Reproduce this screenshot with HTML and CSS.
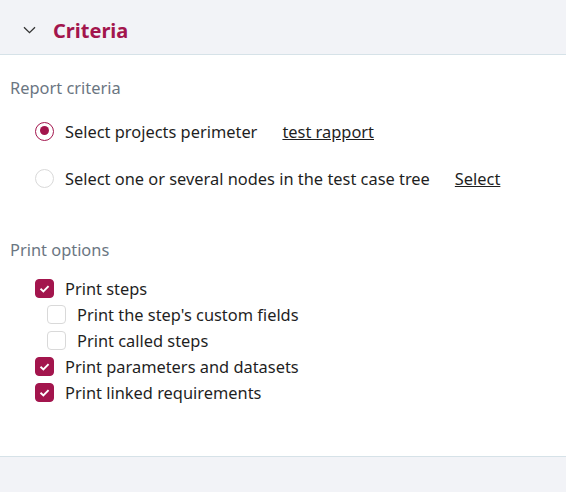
FILE: index.html
```html
<!DOCTYPE html>
<html>
<head>
<meta charset="utf-8">
<link rel="stylesheet" href="styles.css">
</head>
<body>
<div class="page">
  <div class="header">
    <svg class="chevron" width="13" height="8" viewBox="0 0 13 8"><path d="M1 1.2 L6.5 6.7 L12 1.2" fill="none" stroke="#333" stroke-width="1.3"/></svg>
    <span class="title">Criteria</span>
  </div>
  <div class="content">
    <div class="section-title">Report criteria</div>
    <div class="radios">
      <div class="radio-row">
        <span class="radio checked"></span>
        <span class="label">Select projects perimeter</span>
        <a class="link">test rapport</a>
      </div>
      <div class="radio-row">
        <span class="radio"></span>
        <span class="label">Select one or several nodes in the test case tree</span>
        <a class="link">Select</a>
      </div>
    </div>
    <div class="section-title print">Print options</div>
    <div class="checks">
      <div class="check-row"><span class="cb on"><svg viewBox="0 0 18 18"><path d="M4.8 9.3 L7.8 12.2 L13.3 6.4" fill="none" stroke="#fff" stroke-width="2"/></svg></span><span class="label">Print steps</span></div>
      <div class="check-row sub"><span class="cb"></span><span class="label">Print the step's custom fields</span></div>
      <div class="check-row sub"><span class="cb"></span><span class="label">Print called steps</span></div>
      <div class="check-row"><span class="cb on"><svg viewBox="0 0 18 18"><path d="M4.8 9.3 L7.8 12.2 L13.3 6.4" fill="none" stroke="#fff" stroke-width="2"/></svg></span><span class="label">Print parameters and datasets</span></div>
      <div class="check-row"><span class="cb on"><svg viewBox="0 0 18 18"><path d="M4.8 9.3 L7.8 12.2 L13.3 6.4" fill="none" stroke="#fff" stroke-width="2"/></svg></span><span class="label">Print linked requirements</span></div>
    </div>
  </div>
  <div class="footer"></div>
</div>
</body>
</html>
```
FILE: styles.css
```css
* { box-sizing: border-box; }
html, body { margin: 0; padding: 0; }
body { font-family: "Noto Sans", "Open Sans", sans-serif; color: #1f1f1f; background: #fff; width: 566px; height: 492px; overflow: hidden; }
.page { display: flex; flex-direction: column; height: 492px; }
.header { height: 55px; background: #f2f3f7; border-bottom: 1px solid #d6e2e8; display: flex; align-items: center; padding-left: 23px; padding-top: 6px; }
.chevron { margin-right: 17px; }
.title { color: #a3154d; font-weight: 700; font-size: 20px; }
.content { flex: 1; padding-left: 10px; }
.section-title { color: #6b7682; font-size: 16.4px; margin-top: 22px; height: 22px; line-height: 22px; }
.section-title.print { margin-top: 50px; }
.radios { padding-left: 25px; margin-top: 21px; display: flex; flex-direction: column; gap: 25px; }
.radio-row { display: flex; align-items: center; height: 22px; font-size: 16.4px; }
.radio { width: 19px; height: 19px; border-radius: 50%; border: 1px solid #d9d9d9; margin-right: 11px; background: #fff; position: relative; }
.radio.checked { border: 1.5px solid #a3154d; }
.radio.checked::after { content: ""; position: absolute; left: 3.5px; top: 3.5px; width: 9px; height: 9px; border-radius: 50%; background: #a3154d; }
.link { text-decoration: underline; color: #1f1f1f; margin-left: 25px; }
.checks { padding-left: 25px; margin-top: 16px; display: flex; flex-direction: column; gap: 4px; }
.check-row { display: flex; align-items: center; height: 22px; font-size: 16.4px; }
.check-row.sub { padding-left: 12px; }
.cb { width: 19px; height: 19px; border-radius: 4px; border: 1px solid #d9d9d9; background: #fff; margin-right: 11px; display: flex; }
.cb.on { background: #a3154d; border-color: #a3154d; }
.cb svg { width: 100%; height: 100%; }
.footer { height: 36px; background: #f2f3f7; border-top: 1px solid #d6e2e8; }
```
